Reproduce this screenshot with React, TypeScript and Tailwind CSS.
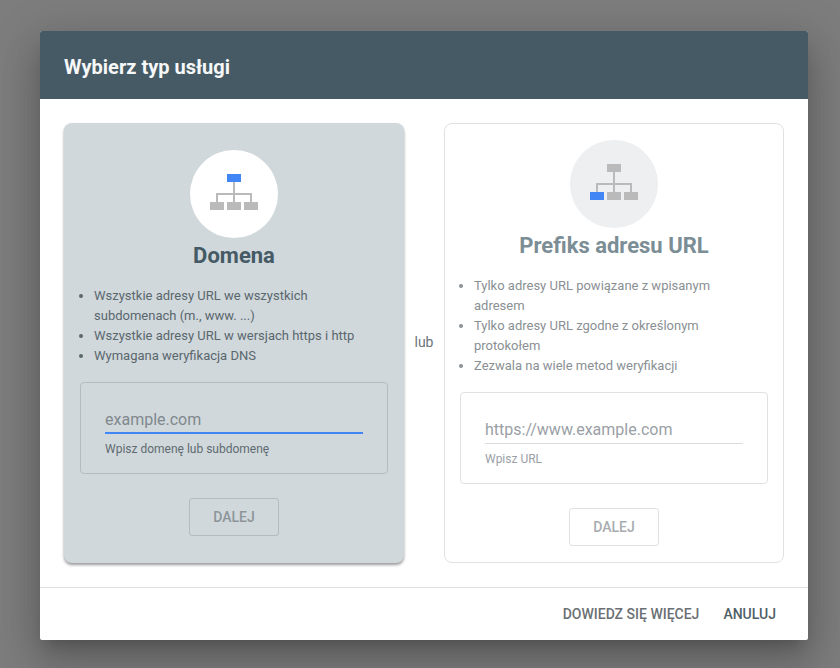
import clsx from "clsx";

interface ServiceCardProps {
  title: string;
  points: string[];
  placeholder: string;
  hint: string;
  activeNode: "top" | "left";
  focused?: boolean;
}

function SiteTreeIcon({ activeNode }: { activeNode: "top" | "left" }) {
  const grey = "#bababa";
  const blue = "#4285f4";

  return (
    <svg width="88" height="88" viewBox="0 0 88 88" aria-hidden="true">
      <path d="M44 32V52M27 52V44H61V52" fill="none" stroke={grey} strokeWidth="2" />
      <rect x="37" y="24" width="14" height="8" fill={activeNode === "top" ? blue : grey} />
      <rect x="20" y="52" width="14" height="8" fill={activeNode === "left" ? blue : grey} />
      <rect x="37" y="52" width="14" height="8" fill={grey} />
      <rect x="54" y="52" width="14" height="8" fill={grey} />
    </svg>
  );
}

function ServiceCard({ title, points, placeholder, hint, activeNode, focused }: ServiceCardProps) {
  return (
    <section
      className={clsx(
        "flex h-[440px] w-[340px] flex-col rounded-lg",
        focused
          ? "bg-[#d0d8dc] px-[16px] pt-[27px] shadow-[0_2px_3px_rgba(0,0,0,0.4)]"
          : "border border-[#dfe1e3] bg-white px-[15px] pt-[16px]",
      )}
    >
      <div
        className={clsx(
          "mx-auto h-[88px] w-[88px] rounded-full",
          focused ? "bg-white" : "bg-[#eeeff0]",
        )}
      >
        <SiteTreeIcon activeNode={activeNode} />
      </div>
      <h2
        className={clsx(
          "mt-[4px] text-center text-[22px] leading-[28px] font-bold",
          focused ? "text-[#455a64]" : "text-[#7b8d95]",
        )}
      >
        {title}
      </h2>
      <ul
        className={clsx(
          "mt-[16px] list-disc pl-[14px] text-[13px] leading-[20px]",
          focused ? "text-[#5a676d]" : "text-[#8a9094]",
        )}
      >
        {points.map((point) => (
          <li key={point} className="pr-[14px]">
            {point}
          </li>
        ))}
      </ul>
      <div
        className={clsx(
          "mt-[16px] h-[92px] rounded border px-[24px] pt-[24px]",
          focused ? "border-[#b4bcc0]" : "border-[#dfe1e3]",
        )}
      >
        <div
          className={clsx(
            "h-[27px] text-[16px] leading-[26px]",
            focused
              ? "border-b-2 border-[#4285f4] text-[#80888c]"
              : "border-b border-[#dadce0] text-[#9aa0a6]",
          )}
        >
          {placeholder}
        </div>
        <p
          className={clsx(
            "mt-[6px] text-[12px] leading-[18px]",
            focused ? "text-[#5f6b70]" : "text-[#9aa0a6]",
          )}
        >
          {hint}
        </p>
      </div>
      <button
        type="button"
        className={clsx(
          "mx-auto mt-[24px] h-[38px] w-[90px] rounded-[3px] border text-[14px] font-medium",
          focused ? "border-[#b4bcc0] text-[#8d9599]" : "border-[#dfe1e3] text-[#a8acb0]",
        )}
      >
        DALEJ
      </button>
    </section>
  );
}

export default function App() {
  return (
    <div className="h-[668px] w-[840px] overflow-hidden bg-[#7d7d7d] pt-[31px] pl-[40px] font-['Roboto',sans-serif]">
      <div className="w-[768px] rounded-[2px] bg-white shadow-[0_24px_38px_3px_rgba(0,0,0,0.14),0_9px_46px_8px_rgba(0,0,0,0.12),0_11px_15px_-7px_rgba(0,0,0,0.2)]">
        <header className="flex h-[68px] items-center rounded-t-[2px] bg-[#455a64] px-[24px] pt-[4px]">
          <h1 className="text-[20px] font-bold text-[#f5f7f8]">Wybierz typ usługi</h1>
        </header>
        <div className="flex items-center justify-between border-b border-[#dfe1e3] p-[24px]">
          <ServiceCard
            focused
            title="Domena"
            activeNode="top"
            points={[
              "Wszystkie adresy URL we wszystkich subdomenach (m., www. ...)",
              "Wszystkie adresy URL w wersjach https i http",
              "Wymagana weryfikacja DNS",
            ]}
            placeholder="example.com"
            hint="Wpisz domenę lub subdomenę"
          />
          <span className="mb-[2px] text-[14px] text-[#6b757a]">lub</span>
          <ServiceCard
            title="Prefiks adresu URL"
            activeNode="left"
            points={[
              "Tylko adresy URL powiązane z wpisanym adresem",
              "Tylko adresy URL zgodne z określonym protokołem",
              "Zezwala na wiele metod weryfikacji",
            ]}
            placeholder="https://www.example.com"
            hint="Wpisz URL"
          />
        </div>
        <footer className="flex h-[52px] items-center justify-end gap-[24px] pr-[32px] text-[14px] font-medium">
          <button type="button" className="text-[#6b7074]">
            DOWIEDZ SIĘ WIĘCEJ
          </button>
          <button type="button" className="text-[#4f5f67]">
            ANULUJ
          </button>
        </footer>
      </div>
    </div>
  );
}
